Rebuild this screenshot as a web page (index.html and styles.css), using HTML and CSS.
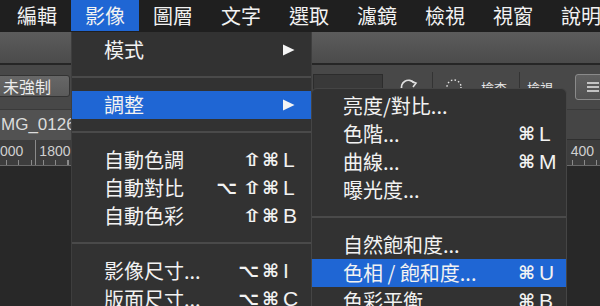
FILE: index.html
```html
<!DOCTYPE html>
<html lang="zh-Hant">
<head>
    <meta charset="UTF-8">
    <title>影像 &gt; 調整</title>
    <link rel="stylesheet" href="styles.css">
</head>
<body>
    <header class="menubar">
        <span class="menubar-item">編輯</span>
        <span class="menubar-item open">影像</span>
        <span class="menubar-item">圖層</span>
        <span class="menubar-item">文字</span>
        <span class="menubar-item">選取</span>
        <span class="menubar-item">濾鏡</span>
        <span class="menubar-item">檢視</span>
        <span class="menubar-item">視窗</span>
        <span class="menubar-item">說明</span>
    </header>

    <div class="appbar"></div>

    <div class="options">
        <span class="opt-button">未強制</span>
        <span class="opt-field"></span>
        <svg class="opt-icon icon-rotate" width="18" height="18" viewBox="0 0 18 18">
            <path d="M2 12 A7 7 0 0 1 14 5" fill="none" stroke="#e0e0e0" stroke-width="1.6"/>
            <path d="M11 3 L16 5 L13 9" fill="none" stroke="#e0e0e0" stroke-width="1.6"/>
        </svg>
        <span class="opt-divider"></span>
        <svg class="opt-icon icon-dots" width="18" height="18" viewBox="0 0 18 18">
            <circle cx="9" cy="9" r="7" fill="none" stroke="#e0e0e0" stroke-width="1.4" stroke-dasharray="1.5 2.2"/>
        </svg>
        <span class="opt-text check">檢查</span>
        <span class="opt-divider short"></span>
        <span class="opt-text view">檢視...</span>
        <span class="opt-menu-btn">
            <svg width="14" height="12" viewBox="0 0 14 12">
                <path d="M1 2 H13 M1 6 H13 M1 10 H13" stroke="#e8e8e8" stroke-width="1.6"/>
            </svg>
        </span>
    </div>

    <div class="tabs">
        <span class="tab">MG_0126</span>
    </div>

    <div class="ruler">
        <span class="ruler-label ruler-first">000</span>
        <span class="ruler-label ruler-second">1800</span>
        <span class="ruler-label ruler-last">400</span>
    </div>

    <div class="canvas"></div>

    <div class="menu menu-main">
        <div class="menu-row">
            <span class="menu-label">模式</span>
            <span class="menu-key">
                <svg class="submenu-arrow" width="12" height="12" viewBox="0 0 12 12"><path d="M0 0.5 L11.5 6 L0 11.5 Z" fill="#f4f4f4"/></svg>
            </span>
        </div>
        <div class="menu-sep"></div>
        <div class="menu-row active">
            <span class="menu-label">調整</span>
            <span class="menu-key">
                <svg class="submenu-arrow" width="12" height="12" viewBox="0 0 12 12"><path d="M0 0.5 L11.5 6 L0 11.5 Z" fill="#f4f4f4"/></svg>
            </span>
        </div>
        <div class="menu-sep"></div>
        <div class="menu-row">
            <span class="menu-label">自動色調</span>
            <span class="menu-mods"><span class="shift">⇧</span>⌘</span><span class="menu-key">L</span>
        </div>
        <div class="menu-row">
            <span class="menu-label">自動對比</span>
            <span class="menu-mods">⌥<span class="shift">⇧</span>⌘</span><span class="menu-key">L</span>
        </div>
        <div class="menu-row">
            <span class="menu-label">自動色彩</span>
            <span class="menu-mods"><span class="shift">⇧</span>⌘</span><span class="menu-key">B</span>
        </div>
        <div class="menu-sep"></div>
        <div class="menu-row">
            <span class="menu-label">影像尺寸...</span>
            <span class="menu-mods">⌥⌘</span><span class="menu-key">I</span>
        </div>
        <div class="menu-row">
            <span class="menu-label">版面尺寸...</span>
            <span class="menu-mods">⌥⌘</span><span class="menu-key">C</span>
        </div>
    </div>

    <div class="menu menu-sub">
        <div class="menu-row">
            <span class="menu-label">亮度/對比...</span>
        </div>
        <div class="menu-row">
            <span class="menu-label">色階...</span>
            <span class="menu-mods">⌘</span><span class="menu-key">L</span>
        </div>
        <div class="menu-row">
            <span class="menu-label">曲線...</span>
            <span class="menu-mods">⌘</span><span class="menu-key">M</span>
        </div>
        <div class="menu-row">
            <span class="menu-label">曝光度...</span>
        </div>
        <div class="menu-sep"></div>
        <div class="menu-row">
            <span class="menu-label">自然飽和度...</span>
        </div>
        <div class="menu-row active">
            <span class="menu-label">色相 / 飽和度...</span>
            <span class="menu-mods">⌘</span><span class="menu-key">U</span>
        </div>
        <div class="menu-row">
            <span class="menu-label">色彩平衡...</span>
            <span class="menu-mods">⌘</span><span class="menu-key">B</span>
        </div>
    </div>
</body>
</html>
```

FILE: styles.css
```css
* {
    box-sizing: border-box;
}
body {
    margin: 0;
    width: 600px;
    height: 306px;
    overflow: hidden;
    position: relative;
    background: #282828;
    font-family: 'Noto Sans CJK TC', sans-serif;
    color: #f2f2f2;
}

/* top menu bar */
.menubar {
    display: flex;
    height: 32px;
    padding-left: 3px;
    background: #1f1f1f;
}
.menubar-item {
    padding: 0 14px;
    font-size: 20px;
    line-height: 31px;
    height: 31px;
    white-space: nowrap;
}
.menubar-item.open {
    background: #1f66d4;
}

/* photoshop workspace behind the menus */
.appbar {
    height: 33px;
    background: linear-gradient(#5c5c5c, #4b4b4b);
    border-bottom: 2px solid #262626;
}
.options {
    display: flex;
    align-items: center;
    height: 45px;
    background: #484848;
    border-bottom: 1px solid #3a3a3a;
    white-space: nowrap;
}
.options > * {
    flex: none;
}
.opt-button {
    width: 82px;
    height: 22px;
    margin-left: -12px;
    margin-top: -2px;
    padding-left: 14px;
    font-size: 16px;
    line-height: 20px;
    color: #ececec;
    background: linear-gradient(#676767, #5a5a5a);
    border: 1px solid #333;
    border-radius: 3px;
}
.opt-field {
    width: 70px;
    height: 26px;
    margin-left: 243px;
    background: #393939;
    border: 1px solid #2c2c2c;
}
.icon-rotate {
    margin-left: 17px;
}
.icon-dots {
    margin-left: 12px;
}
.opt-divider {
    width: 1px;
    height: 30px;
    margin-left: 14px;
    background: #333;
}
.opt-divider.short {
    margin-left: 12px;
}
.opt-text {
    font-size: 13px;
    color: #e6e6e6;
}
.opt-text.check {
    margin-left: 18px;
}
.opt-text.view {
    margin-left: 7px;
}
.opt-menu-btn {
    display: flex;
    align-items: center;
    justify-content: center;
    width: 36px;
    height: 26px;
    margin-left: 11px;
    background: linear-gradient(#606060, #525252);
    border: 1px solid #8a8a8a;
    border-radius: 3px;
}

.tabs {
    height: 30px;
    background: #454545;
    border-bottom: 1px solid #2f2f2f;
}
.tab {
    display: inline-block;
    width: 140px;
    height: 30px;
    padding-left: 1px;
    font-family: 'Liberation Sans', sans-serif;
    font-size: 17px;
    line-height: 30px;
    color: #dcdcdc;
    background: #525252;
}

.ruler {
    display: flex;
    height: 26px;
    background:
        repeating-linear-gradient(90deg, transparent 0 6px, #8a8a8a 6px 7px, transparent 7px 12.3px) bottom / 100% 5px no-repeat,
        #3d3d3d;
    border-bottom: 1px solid #6a6a6a;
    font-family: 'Liberation Sans', sans-serif;
    font-size: 14px;
    line-height: 22px;
    color: #d0d0d0;
}
.ruler-label {
    padding-left: 3px;
    border-left: 1px solid #8a8a8a;
    height: 25px;
}
.ruler-first {
    margin-left: -3px;
    border-left: none;
}
.ruler-second {
    margin-left: 12px;
}
.ruler-last {
    margin-left: auto;
    margin-right: 6px;
    border-left: none;
    padding-left: 0;
}

/* dropdown menus */
.menu {
    position: absolute;
    background: #323232;
    font-size: 20px;
}
.menu-main {
    left: 71px;
    top: 32px;
    width: 241px;
    padding: 4px 0;
    border: 1px solid #3e3e3e;
    border-top: none;
}
.menu-sub {
    left: 311px;
    top: 88px;
    width: 256px;
    padding: 3px 0;
    border: 1px solid #454545;
    border-radius: 6px 6px 0 0;
}
.menu-row {
    display: flex;
    align-items: center;
    height: 28px;
    line-height: 28px;
    padding: 0 13px 0 32px;
    white-space: nowrap;
}
.menu-sub .menu-row {
    padding: 0 12px 0 31px;
}
.menu-row.active {
    background: #1f66d4;
}
.menu-label {
    flex: 1;
}
.menu-mods {
    display: flex;
    align-items: center;
    font-family: 'DejaVu Sans', sans-serif;
    font-size: 18px;
    font-weight: bold;
    letter-spacing: 3px;
}
.shift {
    display: inline-block;
    width: 22px;
    padding-left: 2px;
    letter-spacing: 0;
    transform: scaleX(1.4);
    transform-origin: 2px center;
}
.menu-key {
    display: flex;
    align-items: center;
    width: 16px;
    padding-left: 1px;
    font-family: 'Liberation Sans', sans-serif;
    font-size: 21px;
}
.submenu-arrow {
    display: block;
}
.menu-sep {
    height: 2px;
    margin: 12px 0 13px;
    background: #4a4a4a;
}
```
